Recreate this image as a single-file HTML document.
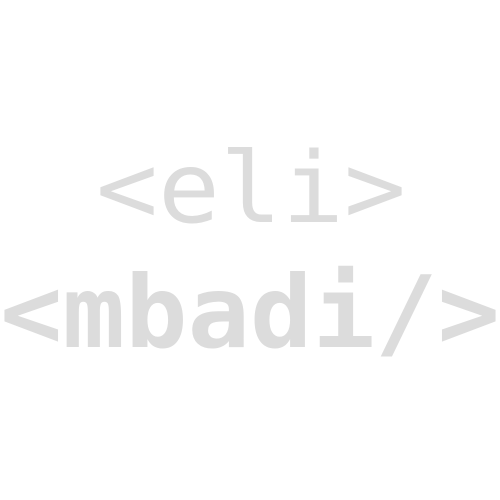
<!DOCTYPE html>
<html><head><style>html,body{margin:0;padding:0;background:#fff;width:500px;height:500px;overflow:hidden}</style></head>
<body>
<svg width="500" height="500" xmlns="http://www.w3.org/2000/svg">
<text x="96" y="222" font-family="DejaVu Sans Mono, monospace" font-size="98" fill="#dcdcdc" textLength="310" lengthAdjust="spacingAndGlyphs">&lt;eli&gt;</text>
<text x="0" y="347" font-family="DejaVu Sans Mono, monospace" font-weight="bold" font-size="100" fill="#dcdcdc" textLength="500" lengthAdjust="spacingAndGlyphs">&lt;mbadi/&gt;</text>
</svg>
</body></html>
